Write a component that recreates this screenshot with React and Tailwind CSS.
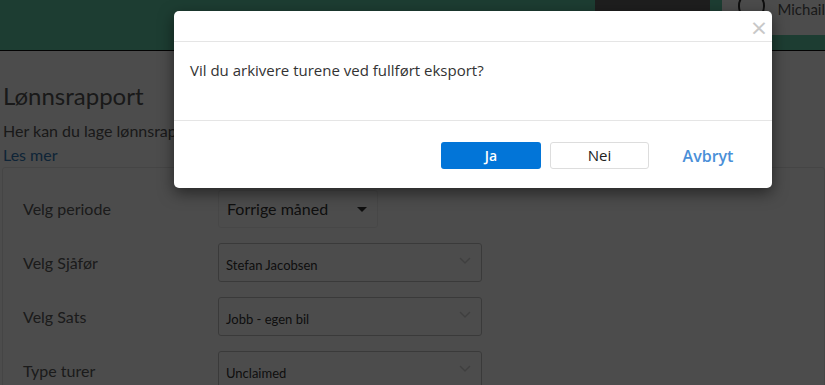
import React from "react";

const rows = [
  { label: "Velg Sjåfør", value: "Stefan Jacobsen" },
  { label: "Velg Sats", value: "Jobb - egen bil" },
  { label: "Type turer", value: "Unclaimed" },
];

export default function App() {
  return (
    <div className="relative w-[825px] h-[385px] overflow-hidden bg-white font-['Lato',sans-serif]">
      {/* Header */}
      <div className="h-[51px] bg-[#62cca8] border-b border-[#0d0d0d] flex items-start justify-end">
        <div className="w-[115px] h-[15px] bg-[#676767] mr-[12px]" />
        <div className="w-[103px] h-[35px] bg-white flex items-start gap-[12px] pl-[16px]">
          <div className="w-[28px] h-[28px] -mt-[8px] rounded-full border-2 border-[#333]" />
          <span className="text-[15px] text-[#555] leading-none mt-[2px]">Michail</span>
        </div>
      </div>

      {/* Page */}
      <div className="px-[3px]">
        <h1 className="text-[24px] leading-none text-[#555] mt-[33px]">Lønnsrapport</h1>
        <p className="text-[16px] leading-none text-[#555] mt-[15px]">
          Her kan du lage lønnsrapporter for dine sjåfører
        </p>
        <a className="block text-[16px] leading-none text-[#337ab7] mt-[8px]">Les mer</a>
      </div>

      <div className="ml-[2px] mt-[4px] border border-[#e6e6e6] rounded-[3px] pl-[20px] pt-[22px]">
        <div className="flex items-center h-[38px]">
          <span className="w-[195px] text-[16px] text-[#5a5a5a]">Velg periode</span>
          <div className="w-[160px] h-[38px] border border-[#eee] rounded-[3px] flex items-center justify-between pl-[8px] pr-[10px]">
            <span className="text-[16px] text-[#333]">Forrige måned</span>
            <span className="w-0 h-0 border-l-[5px] border-r-[5px] border-t-[5px] border-l-transparent border-r-transparent border-t-[#333]" />
          </div>
        </div>
        {rows.map((r) => (
          <div key={r.label} className="flex items-center h-[39px] mt-[15px] first:mt-[16px]">
            <span className="w-[195px] text-[16px] text-[#5a5a5a]">{r.label}</span>
            <div className="w-[264px] h-[39px] border border-[#c4c4c4] rounded-[3px] flex items-center justify-between pl-[7px] pr-[10px] pt-[6px]">
              <span className="text-[13px] text-[#333]">{r.value}</span>
              <svg width="12" height="8" viewBox="0 0 12 8" className="-mt-[10px]">
                <path d="M1 1l5 5 5-5" fill="none" stroke="#d4d4d4" strokeWidth="1.5" />
              </svg>
            </div>
          </div>
        ))}
      </div>

      {/* Backdrop */}
      <div className="absolute inset-0 bg-black/70" />

      {/* Modal */}
      <div className="absolute left-[174px] top-[11px] w-[598px] h-[177px] bg-white rounded-[5px] shadow-[0_5px_15px_rgba(0,0,0,0.5)] font-['Open_Sans',sans-serif] flex flex-col">
        <div className="h-[31px] border-b border-[#e5e5e5] flex justify-end items-center pr-[5px]">
          <span className="text-[28px] leading-none font-normal text-[#c8c8c8] mt-[1px]">×</span>
        </div>
        <div className="h-[79px] border-b border-[#e5e5e5] px-[16px] pt-[17px]">
          <p className="text-[15px] text-[#333]">Vil du arkivere turene ved fullført eksport?</p>
        </div>
        <div className="flex-1 flex justify-end items-start gap-[9px] pt-[21px] pr-[14px]">
          <button className="w-[100px] h-[27px] rounded-[3px] bg-[#0275d8] text-white text-[14px] font-semibold">
            Ja
          </button>
          <button className="w-[99px] h-[27px] rounded-[3px] bg-white border border-[#ddd] text-[#222] text-[15px]">
            Nei
          </button>
          <button className="w-[100px] h-[27px] text-[#4a8fd8] text-[16px] font-semibold">Avbryt</button>
        </div>
      </div>
    </div>
  );
}
